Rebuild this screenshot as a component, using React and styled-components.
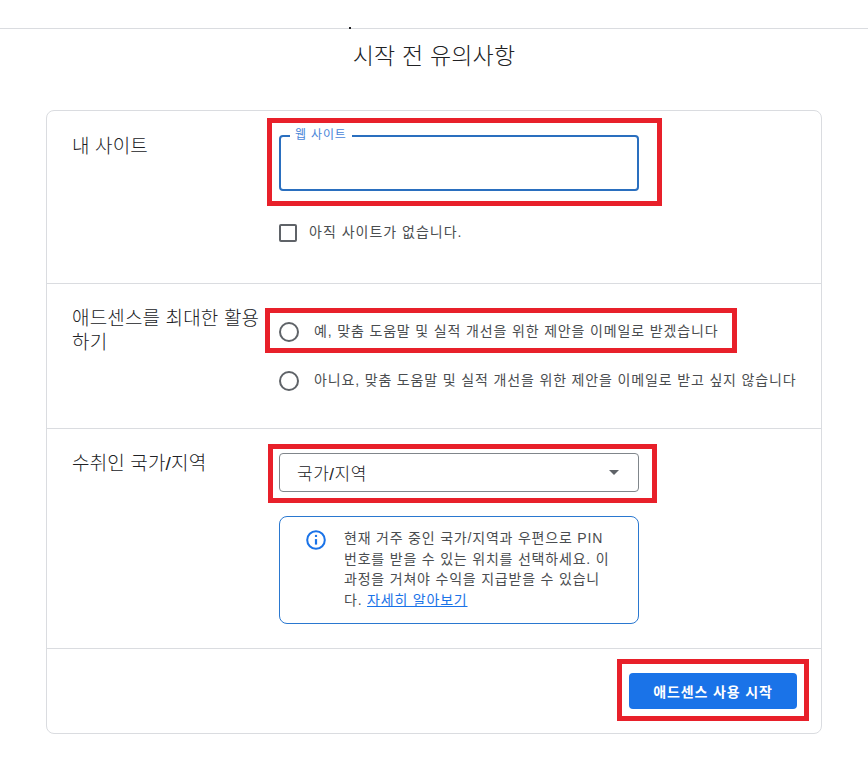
import React from "react";
import styled, { createGlobalStyle } from "styled-components";

const Global = createGlobalStyle`
  html, body { margin: 0; padding: 0; background: #fff; }
  body { font-family: "Liberation Sans", "Noto Sans CJK KR", sans-serif; color: #3c4043; }
  * { box-sizing: border-box; }
`;
const Page = styled.div`width: 868px; height: 769px; overflow: hidden; background: #fff;`;
const TopBar = styled.div`position: relative; height: 29px; border-bottom: 1px solid #dadce0;`;
const Dot = styled.span`position: absolute; left: 349px; top: 27px; width: 2px; height: 2px; background: #202124;`;
const Title = styled.h1`
  margin: 0; height: 81px; padding-top: 12px; text-align: center;
  font-size: 23px; line-height: 30px; font-weight: 300; letter-spacing: 0.2px; color: #202124;
`;
const Card = styled.section`
  margin-left: 46px; width: 776px; height: 624px;
  border: 1px solid #dadce0; border-radius: 8px;
  display: flex; flex-direction: column;
`;
const Row = styled.div`
  height: ${p => p.$h}px; padding: ${p => p.$top}px 0 0 25px;
  display: grid; grid-template-columns: 207px 1fr; align-content: start;
  border-bottom: 1px solid #dadce0;
`;
const Label = styled.div`
  font-size: 19px; line-height: 24px; font-weight: 300; letter-spacing: 0.15px; color: #202124;
  width: 198px; word-break: break-all; margin-top: ${p => p.$nudge || 0}px;
`;
const Column = styled.div`display: flex; flex-direction: column; align-items: flex-start;`;
const Highlight = styled.span`
  position: absolute; pointer-events: none; border: 5px solid #e8202a;
  left: ${p => p.$l}px; top: ${p => p.$t}px; width: ${p => p.$w}px; height: ${p => p.$h}px;
`;
const Field = styled.div`
  position: relative; width: 360px; height: 56px;
  border: 2px solid #2a6fbf; border-radius: 4px;
`;
const FieldLabel = styled.span`
  position: absolute; left: 9px; top: -9px; padding: 0 5px; background: #fff;
  font-size: 12px; line-height: 14px; letter-spacing: 0.85px; color: #4a86d8;
`;
const CheckRow = styled.label`display: flex; align-items: center; gap: 12px; margin-top: 33px;`;
const CheckBox = styled.span`width: 18px; height: 18px; border: 2px solid #5f6368; border-radius: 2px;`;
const OptionText = styled.span`
  font-size: 14px; line-height: 18px; letter-spacing: ${p => p.$spacing || 0.85}px; color: #4a4d50; white-space: nowrap;
  position: relative; top: -1px;
`;
const RadioRow = styled.label`position: relative; display: flex; align-items: center; gap: 15px; height: 20px; margin-top: ${p => p.$mt}px;`;
const Radio = styled.span`width: 20px; height: 20px; border: 2px solid #5f6368; border-radius: 50%;`;
const Select = styled.div`
  position: relative; width: 360px; height: 39px; padding: 0 19px 0 17px;
  display: flex; align-items: center; justify-content: space-between;
  border: 1px solid #80868b; border-radius: 4px; font-size: 17px; font-weight: 300; letter-spacing: 0.5px; color: #202124;
`;
const Caret = styled.span`border-left: 5px solid transparent; border-right: 5px solid transparent; border-top: 5px solid #5f6368;`;
const Notice = styled.div`
  width: 360px; height: 108px; margin-top: 24px; padding: 11px 22px 0 25px;
  display: flex; gap: 17px;
  border: 1px solid #2a78d0; border-radius: 8px;
`;
const NoticeIcon = styled.svg`flex: none; width: 22px; height: 22px; margin-top: 1px;`;
const NoticeText = styled.p`
  margin: 0; font-size: 14px; line-height: 20.5px; letter-spacing: 0.8px; color: #4a4d50; word-break: break-all;
`;
const Link = styled.a`color: #1a73e8; text-decoration: underline;`;
const Footer = styled.div`flex: 1; display: flex; justify-content: flex-end; align-items: flex-start; padding: 24px 24px 0 0;`;
const Primary = styled.button`
  position: relative; width: 168px; height: 36px; border: 0; border-radius: 4px; background: #1a73e8;
  color: #fff; font: 700 14px "Liberation Sans", "Noto Sans CJK KR", sans-serif; letter-spacing: 0.85px;
`;

export default function App() {
  return (
    <Page>
      <Global />
      <TopBar><Dot /></TopBar>
      <Title>시작 전 유의사항</Title>
      <Card>
        <Row $h={173} $top={24}>
          <Label>내 사이트</Label>
          <Column>
            <Field>
              <FieldLabel>웹 사이트</FieldLabel>
              <Highlight $l={-14} $t={-19} $w={395} $h={88} />
            </Field>
            <CheckRow><CheckBox /><OptionText $spacing={1}>아직 사이트가 없습니다.</OptionText></CheckRow>
          </Column>
        </Row>
        <Row $h={145} $top={23}>
          <Label>애드센스를 최대한 활용하기</Label>
          <Column>
            <RadioRow $mt={15}>
              <Radio /><OptionText>예, 맞춤 도움말 및 실적 개선을 위한 제안을 이메일로 받겠습니다</OptionText>
              <Highlight $l={-14} $t={-14} $w={472} $h={45} />
            </RadioRow>
            <RadioRow $mt={29}>
              <Radio /><OptionText>아니요, 맞춤 도움말 및 실적 개선을 위한 제안을 이메일로 받고 싶지 않습니다</OptionText>
            </RadioRow>
          </Column>
        </Row>
        <Row $h={220} $top={24}>
          <Label $nudge={-1}>수취인 국가/지역</Label>
          <Column>
            <Select>
              국가/지역<Caret />
              <Highlight $l={-12} $t={-10} $w={389} $h={59} />
            </Select>
            <Notice>
              <NoticeIcon viewBox="0 0 24 24" fill="none" stroke="#1a73e8" strokeWidth="2.2">
                <circle cx="12" cy="12" r="9.6" />
                <path d="M12 11v6" strokeWidth="2.4" />
                <circle cx="12" cy="7.5" r="1.3" fill="#1a73e8" stroke="none" />
              </NoticeIcon>
              <NoticeText>현재 거주 중인 국가/지역과 우편으로 PIN 번호를 받을 수 있는 위치를 선택하세요. 이 과정을 거쳐야 수익을 지급받을 수 있습니다. <Link href="#">자세히 알아보기</Link></NoticeText>
            </Notice>
          </Column>
        </Row>
        <Footer>
          <Primary>애드센스 사용 시작<Highlight $l={-12} $t={-14} $w={192} $h={62} /></Primary>
        </Footer>
      </Card>
    </Page>
  );
}
